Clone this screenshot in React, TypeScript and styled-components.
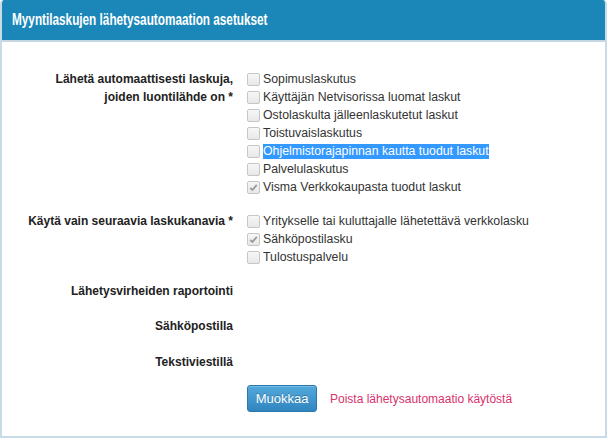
import styled, { createGlobalStyle } from 'styled-components';

const Global = createGlobalStyle`
  body {
    margin: 0;
    background: #ffffff;
    font-family: Arial, "Liberation Sans", sans-serif;
  }
`;

const Panel = styled.section`
  width: 607px;
  height: 438px;
  box-sizing: border-box;
  border: 2px solid #c9dbe7;
  border-top: none;
  border-radius: 4px 4px 0 0;
  overflow: hidden;
`;

const Header = styled.h2`
  margin: 0 -2px;
  height: 42px;
  box-sizing: border-box;
  padding: 0 12px;
  display: flex;
  align-items: center;
  background: #1b87b9;
  border-bottom: 2px solid #c3d6e2;
  color: #ffffff;
  font-size: 16px;
  font-weight: bold;
`;

// the original heading uses a condensed face
const HeaderText = styled.span`
  display: inline-block;
  white-space: nowrap;
  transform: scaleX(0.735);
  transform-origin: left center;
`;

const Body = styled.div`
  padding-top: 28px;
  display: flex;
  flex-direction: column;
`;

const Row = styled.div<{ $gap?: number }>`
  display: grid;
  grid-template-columns: 233px 1fr;
  column-gap: 12px;
  margin-bottom: ${({ $gap }) => $gap ?? 16}px;
`;

const Label = styled.div`
  padding-right: 2px;
  text-align: right;
  font-size: 12px;
  font-weight: bold;
  line-height: 18px;
  color: #222222;
`;

const Options = styled.ul`
  list-style: none;
  margin: 0;
  padding: 0;
`;

const Option = styled.li`
  display: flex;
  align-items: center;
  height: 18px;
  font-size: 12.3px;
  color: #333333;
`;

const Box = styled.span`
  width: 11px;
  height: 11px;
  margin-right: 3px;
  border: 1px solid #c6c6c6;
  border-radius: 2px;
  background: linear-gradient(#f7f7f7, #e8e8e8);
  display: inline-flex;
  align-items: center;
  justify-content: center;
  flex-shrink: 0;
`;

const OptionText = styled.span<{ $selected?: boolean }>`
  line-height: 15px;
  background: ${({ $selected }) => ($selected ? '#3399ff' : 'transparent')};
  color: ${({ $selected }) => ($selected ? '#ffffff' : 'inherit')};
`;

const Actions = styled.div`
  display: flex;
  align-items: center;
  gap: 13px;
`;

const Button = styled.button`
  width: 70px;
  height: 27px;
  border: 1px solid #2b78ad;
  border-radius: 3px;
  background: linear-gradient(#53a9dc, #3185bf);
  color: #ffffff;
  font-family: inherit;
  font-size: 13px;
  text-shadow: 0 -1px 0 rgba(0, 0, 0, 0.25);
  box-shadow: inset 0 1px 0 rgba(255, 255, 255, 0.2);
  padding: 0;
`;

const Link = styled.a`
  font-size: 12px;
  color: #d8336e;
  text-decoration: none;
`;

const Check = () => (
  <svg width="9" height="9" viewBox="0 0 9 9">
    <path d="M1.2 4.8 L3.4 7 L7.8 1.8" stroke="#9a9a9a" strokeWidth="1.8" fill="none" />
  </svg>
);

type Item = { text: string; checked?: boolean; selected?: boolean };

const sources: Item[] = [
  { text: 'Sopimuslaskutus' },
  { text: 'Käyttäjän Netvisorissa luomat laskut' },
  { text: 'Ostolaskulta jälleenlaskutetut laskut' },
  { text: 'Toistuvaislaskutus' },
  { text: 'Ohjelmistorajapinnan kautta tuodut laskut', selected: true },
  { text: 'Palvelulaskutus' },
  { text: 'Visma Verkkokaupasta tuodut laskut', checked: true },
];

const channels: Item[] = [
  { text: 'Yritykselle tai kuluttajalle lähetettävä verkkolasku' },
  { text: 'Sähköpostilasku', checked: true },
  { text: 'Tulostuspalvelu' },
];

const CheckList = ({ items }: { items: Item[] }) => (
  <Options>
    {items.map((x) => (
      <Option key={x.text}>
        <Box>{x.checked && <Check />}</Box>
        <OptionText $selected={x.selected}>{x.text}</OptionText>
      </Option>
    ))}
  </Options>
);

export default function App() {
  return (
    <>
      <Global />
      <Panel>
        <Header>
          <HeaderText>Myyntilaskujen lähetysautomaation asetukset</HeaderText>
        </Header>
        <Body>
          <Row>
            <Label>
              Lähetä automaattisesti laskuja,
              <br />
              joiden luontilähde on *
            </Label>
            <CheckList items={sources} />
          </Row>
          <Row>
            <Label>Käytä vain seuraavia laskukanavia *</Label>
            <CheckList items={channels} />
          </Row>
          <Row $gap={17}>
            <Label>Lähetysvirheiden raportointi</Label>
          </Row>
          <Row $gap={18}>
            <Label>Sähköpostilla</Label>
          </Row>
          <Row $gap={14}>
            <Label>Tekstiviestillä</Label>
          </Row>
          <Row>
            <div />
            <Actions>
              <Button>Muokkaa</Button>
              <Link href="#">Poista lähetysautomaatio käytöstä</Link>
            </Actions>
          </Row>
        </Body>
      </Panel>
    </>
  );
}
